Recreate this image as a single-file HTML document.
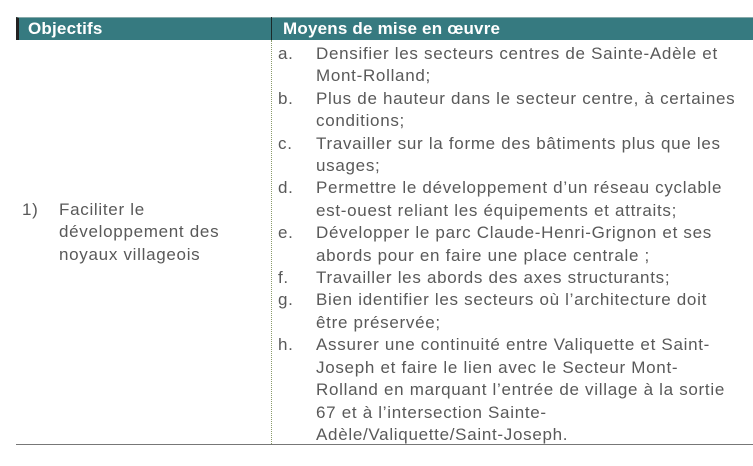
<!DOCTYPE html>
<html><head><meta charset="utf-8"><style>
body{margin:0;background:#fff;width:753px;height:466px;overflow:hidden;font-family:"Liberation Sans",sans-serif;}
.hdr{position:absolute;left:16px;top:17px;width:737px;height:23px;background:#367a80;border-top:1px solid #8aa;border-left:3px solid #222;box-sizing:border-box;color:#fff;font-weight:bold;font-size:17px;line-height:22px;letter-spacing:0.2px}
.hdr span{position:absolute;top:0}
.div{position:absolute;left:271px;top:17px;width:1px;height:23px;background:#1a2a2a}
.dot{position:absolute;left:271px;top:40px;height:404px;border-left:1px dotted #8a9a6a}
.bot{position:absolute;left:16px;top:444px;width:737px;height:1px;background:#777}
.t{color:#595959;font-size:17px;letter-spacing:0.7px;}
.list{position:absolute;left:278px;top:43px;width:475px;line-height:22.4px;white-space:nowrap}
.item{position:relative}
.item b{font-weight:normal;position:absolute;left:0}
.item div{margin-left:38px}
.left{position:absolute;left:22px;top:199px;line-height:22.4px;white-space:nowrap}
</style></head><body>
<div class="hdr"><span style="left:9px">Objectifs</span><span style="left:264px">Moyens de mise en œuvre</span></div>
<div class="div"></div><div class="dot"></div><div class="bot"></div>
<div class="t left"><span style="position:absolute;left:0">1)</span><div style="margin-left:37px;width:190px">Faciliter le<br>développement des<br>noyaux villageois</div></div>
<div class="t list">
<div class="item"><b>a.</b><div>Densifier les secteurs centres de Sainte-Adèle et<br>Mont-Rolland;</div></div>
<div class="item"><b>b.</b><div>Plus de hauteur dans le secteur centre, à certaines<br>conditions;</div></div>
<div class="item"><b>c.</b><div>Travailler sur la forme des bâtiments plus que les<br>usages;</div></div>
<div class="item"><b>d.</b><div>Permettre le développement d’un réseau cyclable<br>est-ouest reliant les équipements et attraits;</div></div>
<div class="item"><b>e.</b><div>Développer le parc Claude-Henri-Grignon et ses<br>abords pour en faire une place centrale ;</div></div>
<div class="item"><b>f.</b><div>Travailler les abords des axes structurants;</div></div>
<div class="item"><b>g.</b><div>Bien identifier les secteurs où l’architecture doit<br>être préservée;</div></div>
<div class="item"><b>h.</b><div>Assurer une continuité entre Valiquette et Saint-<br>Joseph et faire le lien avec le Secteur Mont-<br>Rolland en marquant l’entrée de village à la sortie<br>67 et à l’intersection Sainte-<br>Adèle/Valiquette/Saint-Joseph.</div></div>
</div>
</body></html>
